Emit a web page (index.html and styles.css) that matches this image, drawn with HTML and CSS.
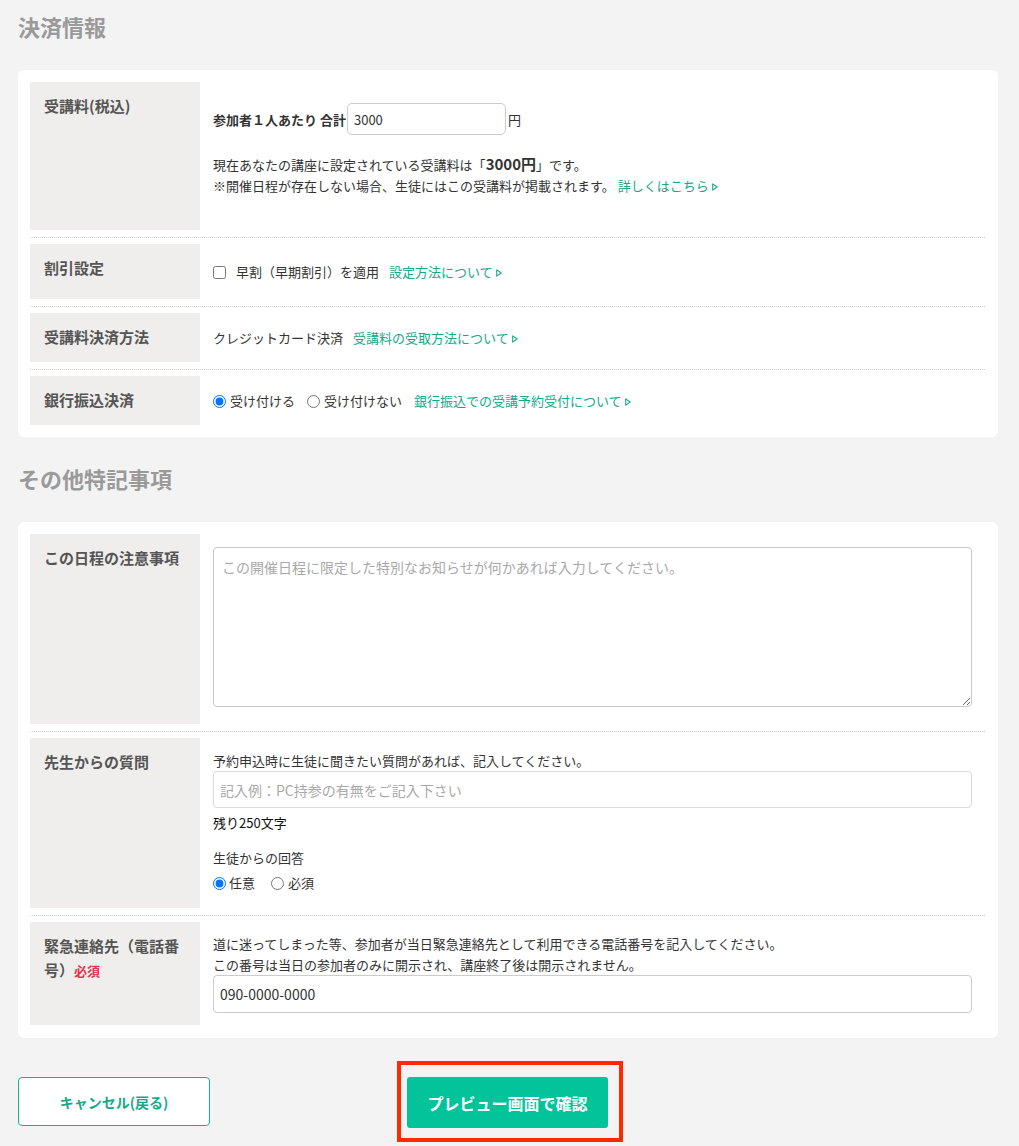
FILE: index.html
```html
<!DOCTYPE html>
<html lang="ja">
<head>
<meta charset="utf-8">
<title>決済情報</title>
<link rel="stylesheet" href="styles.css">
</head>
<body>
<div class="page">
  <h2 class="section-title">決済情報</h2>
  <div class="card">
    <div class="row">
      <div class="label">受講料(税込)</div>
      <div class="content fee">
        <div class="fee-line">
          <span class="strong">参加者１人あたり 合計</span>
          <input class="fee-input" type="text" value="3000">
          <span class="yen">円</span>
        </div>
        <div class="fee-desc">
          <p>現在あなたの講座に設定されている受講料は「<b class="big">3000円</b>」です。</p>
          <p>※開催日程が存在しない場合、生徒にはこの受講料が掲載されます。 <a class="link" href="#">詳しくはこちら<svg class="arrow" width="6" height="8" viewBox="0 0 6 8"><path d="M0.7 0.9 L5.2 4 L0.7 7.1 Z" fill="none" stroke="currentColor" stroke-width="1.1" stroke-linejoin="round"/></svg></a></p>
        </div>
      </div>
    </div>
    <div class="row">
      <div class="label">割引設定</div>
      <div class="content discount">
        <label class="check"><input type="checkbox">早割（早期割引）を適用</label>
        <a class="link" href="#">設定方法について<svg class="arrow" width="6" height="8" viewBox="0 0 6 8"><path d="M0.7 0.9 L5.2 4 L0.7 7.1 Z" fill="none" stroke="currentColor" stroke-width="1.1" stroke-linejoin="round"/></svg></a>
      </div>
    </div>
    <div class="row">
      <div class="label">受講料決済方法</div>
      <div class="content simple">
        <span class="gap-right">クレジットカード決済</span><a class="link" href="#">受講料の受取方法について<svg class="arrow" width="6" height="8" viewBox="0 0 6 8"><path d="M0.7 0.9 L5.2 4 L0.7 7.1 Z" fill="none" stroke="currentColor" stroke-width="1.1" stroke-linejoin="round"/></svg></a>
      </div>
    </div>
    <div class="row">
      <div class="label">銀行振込決済</div>
      <div class="content simple">
        <label class="radio r-first"><input type="radio" name="bank" checked>受け付ける</label>
        <label class="radio r-second"><input type="radio" name="bank">受け付けない</label>
        <a class="link" href="#">銀行振込での受講予約受付について<svg class="arrow" width="6" height="8" viewBox="0 0 6 8"><path d="M0.7 0.9 L5.2 4 L0.7 7.1 Z" fill="none" stroke="currentColor" stroke-width="1.1" stroke-linejoin="round"/></svg></a>
      </div>
    </div>
  </div>

  <h2 class="section-title second">その他特記事項</h2>
  <div class="card card-two">
    <div class="row">
      <div class="label">この日程の注意事項</div>
      <div class="content notes">
        <textarea class="textarea" placeholder="この開催日程に限定した特別なお知らせが何かあれば入力してください。"></textarea>
      </div>
    </div>
    <div class="row">
      <div class="label">先生からの質問</div>
      <div class="content question">
        <p>予約申込時に生徒に聞きたい質問があれば、記入してください。</p>
        <input class="text-input light" type="text" placeholder="記入例：PC持参の有無をご記入下さい">
        <p class="remain">残り250文字</p>
        <p class="answer-title">生徒からの回答</p>
        <div class="answer-radios">
          <label class="radio q-first"><input type="radio" name="ans" checked>任意</label>
          <label class="radio"><input type="radio" name="ans">必須</label>
        </div>
      </div>
    </div>
    <div class="row">
      <div class="label">緊急連絡先（電話番号）<span class="required">必須</span></div>
      <div class="content emergency">
        <p>道に迷ってしまった等、参加者が当日緊急連絡先として利用できる電話番号を記入してください。</p>
        <p>この番号は当日の参加者のみに開示され、講座終了後は開示されません。</p>
        <input class="text-input tel" type="text" value="090-0000-0000">
      </div>
    </div>
  </div>

  <div class="actions">
    <button class="btn-cancel" type="button">キャンセル(戻る)</button>
    <div class="highlight">
      <button class="btn-preview" type="button">プレビュー画面で確認</button>
    </div>
  </div>
</div>
</body>
</html>
```

FILE: styles.css
```css
body {
  margin: 0;
  background: #f3f3f3;
  font-family: "Noto Sans CJK JP", "Noto Sans", sans-serif;
  color: #333;
}

.page {
  width: 980px;
  padding: 10px 0 0 18px;
}

p {
  margin: 0;
}

.section-title {
  margin: 0 0 27px;
  font-size: 22px;
  line-height: 33px;
  font-weight: 700;
  color: #9a9a9a;
}

.section-title.second {
  margin-top: 25px;
  margin-bottom: 27px;
}

.card {
  background: #fff;
  border-radius: 6px;
  padding: 12px 13px 12px 12px;
}

.card-two {
  padding-bottom: 13px;
}

.row {
  display: flex;
}

.row:not(:last-child) {
  border-bottom: 1px dotted #cfcfcf;
  padding-bottom: 7px;
  margin-bottom: 6px;
}

.label {
  flex: none;
  width: 170px;
  box-sizing: border-box;
  background: #efeeec;
  padding: 12px 14px 13px;
  font-size: 15px;
  line-height: 24px;
  font-weight: 700;
  color: #555;
}

.required {
  color: #e5334f;
  font-size: 13px;
}

.content {
  flex: 1;
  min-width: 0;
  padding: 14px 13px 0 13px;
  font-size: 13px;
  line-height: 21px;
  color: #333;
}

.fee {
  padding-top: 21px;
  padding-bottom: 34px;
}

.fee-line {
  display: flex;
  align-items: center;
  height: 32px;
}

.strong {
  font-weight: 700;
}

.fee-input {
  width: 159px;
  height: 32px;
  box-sizing: border-box;
  margin: 0 0 0 1px;
  padding: 0 6px;
  border: 1px solid #ccc;
  border-radius: 5px;
  font-family: inherit;
  font-size: 13px;
  color: #333;
}

.yen {
  margin-left: 2px;
}

.fee-desc {
  margin-top: 18px;
}

.big {
  font-size: 15px;
}

.link {
  color: #14a98a;
  text-decoration: none;
}

.arrow {
  margin-left: 3px;
  vertical-align: 0;
}

.discount {
  padding-top: 17px;
  padding-bottom: 17px;
}

.check input {
  width: 13px;
  height: 13px;
  margin: 0 10px 0 0;
  vertical-align: -2px;
}

.check {
  margin-right: 7px;
}

.gap-right {
  margin-right: 10px;
}

.radio input {
  width: 13px;
  height: 13px;
  margin: 0 4px 0 0;
  vertical-align: -2px;
}

.r-first {
  margin-right: 9px;
}

.r-second {
  margin-right: 9px;
}

.notes {
  padding-top: 13px;
  padding-bottom: 17px;
}

.textarea {
  display: block;
  width: 100%;
  height: 160px;
  box-sizing: border-box;
  margin: 0;
  padding: 9px 8px;
  border: 1px solid #c8c8c8;
  border-radius: 4px;
  font-family: inherit;
  font-size: 14px;
  line-height: 21px;
  color: #333;
}

.textarea::placeholder,
.text-input::placeholder {
  color: #a9a9a9;
}

.question {
  padding-top: 12px;
  padding-bottom: 15px;
}

.text-input {
  display: block;
  width: 100%;
  box-sizing: border-box;
  margin: 0;
  padding: 0 6px;
  border: 1px solid #ccc;
  border-radius: 4px;
  font-family: inherit;
  font-size: 14px;
  color: #333;
}

.text-input.light {
  height: 37px;
  border-color: #dadada;
}

.remain {
  margin-top: 4px;
  color: #111;
}

.answer-title {
  margin-top: 14px;
}

.answer-radios {
  margin-top: 4px;
}

.q-first {
  margin-right: 13px;
}

.q-first input {
  margin-right: 3px;
}

.emergency {
  padding-top: 11px;
  padding-bottom: 12px;
}

.text-input.tel {
  height: 38px;
  margin-top: 0;
}

.actions {
  display: flex;
  align-items: flex-start;
  margin-top: 23px;
}

.btn-cancel {
  width: 192px;
  height: 49px;
  margin-top: 16px;
  box-sizing: border-box;
  background: #fff;
  border: 1px solid #13b38b;
  border-radius: 4px;
  color: #14a98a;
  font-family: inherit;
  font-size: 14px;
  font-weight: 700;
  cursor: pointer;
}

.highlight {
  margin-left: 187px;
  border: 4px solid #ff2a00;
  padding: 12px 11px 10px 6px;
}

.btn-preview {
  display: block;
  width: 201px;
  height: 51px;
  background: #03c39b;
  border: none;
  border-radius: 3px;
  color: #fff;
  font-family: inherit;
  font-size: 16px;
  font-weight: 700;
  cursor: pointer;
}
```
